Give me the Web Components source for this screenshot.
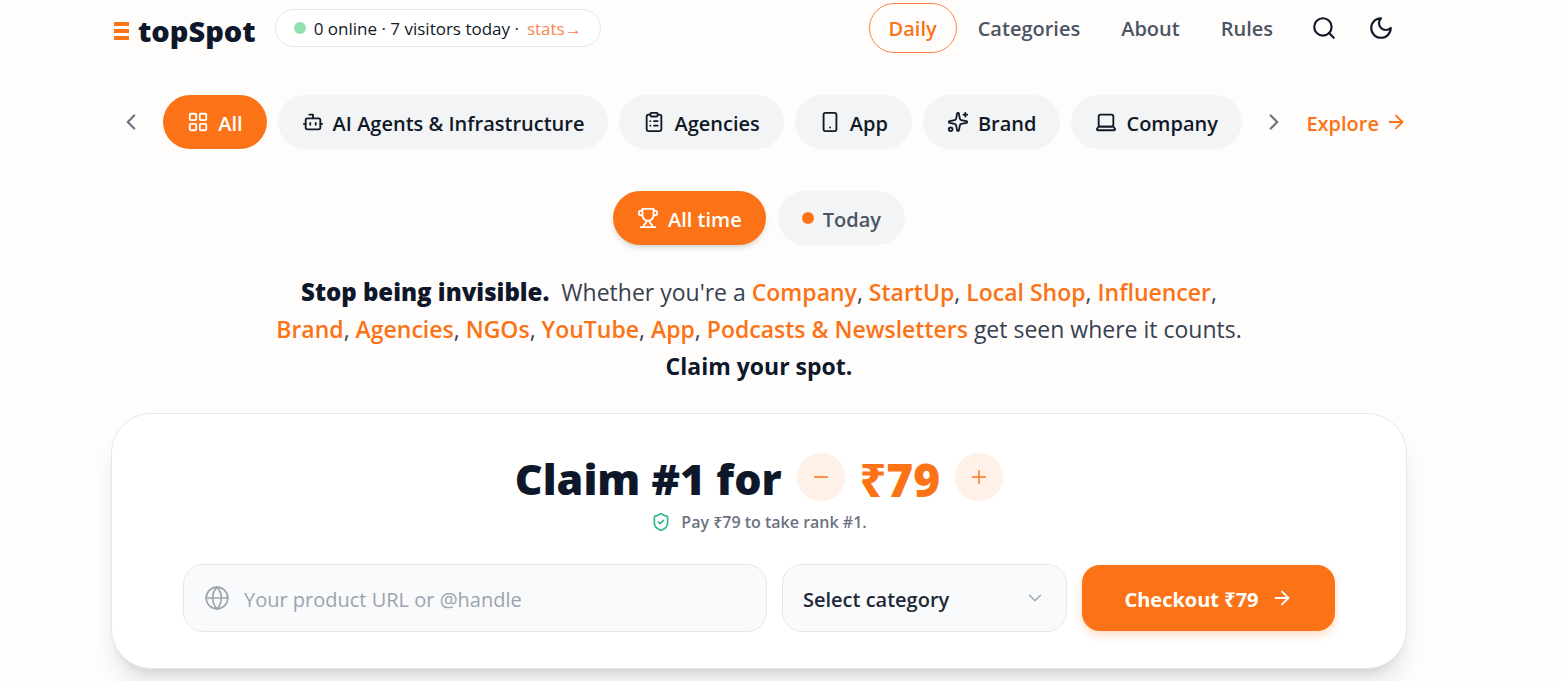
<!DOCTYPE html>
<html lang="en">
<head>
<meta charset="utf-8">
<meta name="viewport" content="width=device-width, initial-scale=1">
<title>topSpot</title>
<style>
    body{
        margin:0;
        background:#fefdfb;
        color:#111827;
        font-family:"Open Sans","Noto Sans",sans-serif;
        --accent:#fb7316;
        --ink:#0f172a;
        --muted:#4b5563;
        --soft:#f3f4f6;
        --line:#e5e7eb;
    }
</style>
</head>
<body>
<top-page>
    <top-header slot="header">
        <visitor-badge slot="badge" online="0" visitors="7"></visitor-badge>
        <nav-link current>Daily</nav-link>
        <nav-link>Categories</nav-link>
        <nav-link>About</nav-link>
        <nav-link>Rules</nav-link>
    </top-header>

    <category-bar slot="categories">
        <pill-button icon="grid" active>All</pill-button>
        <pill-button icon="bot">AI Agents &amp; Infrastructure</pill-button>
        <pill-button icon="clipboard">Agencies</pill-button>
        <pill-button icon="tablet">App</pill-button>
        <pill-button icon="sparkles">Brand</pill-button>
        <pill-button icon="laptop">Company</pill-button>
    </category-bar>

    <period-switch slot="period">
        <pill-button icon="trophy" active raised>All time</pill-button>
        <pill-button dot>Today</pill-button>
    </period-switch>

    <hero-text slot="hero"></hero-text>
    <claim-card price="79" rank="1"></claim-card>
</top-page>

<script>
const ICONS = {
    grid:'<rect x="3" y="3" width="7" height="7" rx="1"/><rect x="14" y="3" width="7" height="7" rx="1"/><rect x="14" y="14" width="7" height="7" rx="1"/><rect x="3" y="14" width="7" height="7" rx="1"/>',
    bot:'<path d="M12 8V4H8"/><rect x="4" y="8" width="16" height="12" rx="2"/><path d="M2 14h2M20 14h2M15 13v2M9 13v2"/>',
    clipboard:'<rect x="8" y="2" width="8" height="4" rx="1"/><path d="M16 4h2a2 2 0 0 1 2 2v14a2 2 0 0 1-2 2H6a2 2 0 0 1-2-2V6a2 2 0 0 1 2-2h2"/><path d="M12 11h4M12 16h4M8 11h.01M8 16h.01"/>',
    tablet:'<rect x="5" y="2" width="14" height="20" rx="2"/><path d="M12 18h.01"/>',
    sparkles:'<path d="M11.017 2.814a1 1 0 0 1 1.966 0l1.051 5.558a2 2 0 0 0 1.594 1.594l5.558 1.051a1 1 0 0 1 0 1.966l-5.558 1.051a2 2 0 0 0-1.594 1.594l-1.051 5.558a1 1 0 0 1-1.966 0l-1.051-5.558a2 2 0 0 0-1.594-1.594l-5.558-1.051a1 1 0 0 1 0-1.966l5.558-1.051a2 2 0 0 0 1.594-1.594z"/><path d="M20 2v4M22 4h-4"/><circle cx="4" cy="20" r="2"/>',
    laptop:'<rect x="4" y="4" width="16" height="13" rx="2"/><path d="M4 17h16l2 3a1 1 0 0 1-1 1H3a1 1 0 0 1-1-1z"/>',
    trophy:'<path d="M6 9H4.500a2.500 2.500 0 0 1 0-5H6M18 9h1.500a2.500 2.500 0 0 0 0-5H18M4 22h16M10 14.660V17c0 .550-.470.980-.970 1.210C7.850 18.750 7 20.240 7 22M14 14.660V17c0 .550.470.980.970 1.210C16.150 18.750 17 20.240 17 22M18 2H6v7a6 6 0 0 0 12 0V2z"/>',
    search:'<circle cx="11" cy="11" r="8"/><path d="m21 21-4.300-4.300"/>',
    moon:'<path d="M12 3a6 6 0 0 0 9 9 9 9 0 1 1-9-9z"/>',
    left:'<path d="m15 18-6-6 6-6"/>',
    right:'<path d="m9 18 6-6-6-6"/>',
    down:'<path d="m6 9 6 6 6-6"/>',
    arrow:'<path d="M5 12h14M12 5l7 7-7 7"/>',
    minus:'<path d="M5 12h14"/>',
    plus:'<path d="M5 12h14M12 5v14"/>',
    globe:'<circle cx="12" cy="12" r="10"/><path d="M12 2a14.500 14.500 0 0 0 0 20 14.500 14.500 0 0 0 0-20M2 12h20"/>',
    shield:'<path d="M20 13c0 5-3.500 7.500-7.660 8.950a1 1 0 0 1-.670-.010C7.500 20.500 4 18 4 13V6a1 1 0 0 1 1-1c2 0 4.500-1.200 6.240-2.720a1.170 1.170 0 0 1 1.520 0C14.510 3.810 17 5 19 5a1 1 0 0 1 1 1z"/><path d="m9 12 2 2 4-4"/>'
}

// shared by every element: build the shadow root from getTemplate() and getStyle()
class BaseElement extends HTMLElement{
    constructor(){
        super()
        this.attachShadow({mode:'open'})
    }

    getStyle(){
        return ''
    }

    render(){
        const template = document.createElement("template")
        template.innerHTML = `
        <style>
            *{ box-sizing:border-box; }
            a{ color:inherit; text-decoration:none; }
            button{
                font:inherit;
                color:inherit;
                background:none;
                border:0;
                padding:0;
                cursor:pointer;
            }
            ${this.getStyle()}
        </style>
        ${this.getTemplate()}
        `
        this.shadowRoot.append(template.content.cloneNode(true))
    }

    connectedCallback(){
        if(!this.shadowRoot.hasChildNodes()) this.render()
    }
}

class UiIcon extends BaseElement{
    getTemplate(){
        return `<svg viewBox="0 0 24 24" aria-hidden="true">${ICONS[this.getAttribute('name')]}</svg>`
    }

    getStyle(){
        return `
            :host{
                display:block;
                flex:none;
                width:var(--icon-size,22px);
                height:var(--icon-size,22px);
            }
            svg{
                display:block;
                width:100%;
                height:100%;
                fill:none;
                stroke:currentColor;
                stroke-width:var(--icon-stroke,2);
                stroke-linecap:round;
                stroke-linejoin:round;
            }
        `
    }
}

class TopPage extends BaseElement{
    getTemplate(){
        return `
        <div class="wrap">
            <slot name="header"></slot>
            <main>
                <slot name="categories"></slot>
                <slot name="period"></slot>
                <slot name="hero"></slot>
                <slot></slot>
            </main>
        </div>`
    }

    getStyle(){
        return `
            :host{
                display:block;
                padding:0 68px 12px 24px;
            }
            .wrap{
                max-width:1296px;
                margin:0 auto;
            }
        `
    }
}

class TopHeader extends BaseElement{
    getTemplate(){
        return `
        <header>
            <a class="logo" href="#">
                <svg viewBox="0 0 15 18" aria-hidden="true"><path d="M0 0h15v4H0zM0 7h15v4H0zM0 14h15v4H0z"/></svg>
                <span>topSpot</span>
            </a>
            <slot name="badge"></slot>
            <nav><slot></slot></nav>
            <button class="tool" aria-label="Search"><ui-icon name="search"></ui-icon></button>
            <button class="tool" aria-label="Dark mode"><ui-icon name="moon"></ui-icon></button>
        </header>`
    }

    getStyle(){
        return `
            :host{ display:block; }
            header{
                display:flex;
                align-items:center;
                height:56px;
                padding-left:3px;
            }
            .logo{
                display:flex;
                align-items:center;
                gap:9px;
                margin-right:19px;
                padding-top:6px;
                color:var(--ink);
                font-size:29px;
                line-height:36px;
                font-weight:800;
            }
            .logo svg{
                width:15px;
                height:18px;
                fill:var(--accent);
            }
            nav{
                display:flex;
                gap:1px;
                margin-left:auto;
                margin-right:2px;
            }
            .tool{
                display:grid;
                place-items:center;
                width:57px;
                height:48px;
                --icon-size:26px;
            }
            .tool:last-child{ margin-right:-2px; }
        `
    }
}

class VisitorBadge extends BaseElement{
    getTemplate(){
        return `
        <i></i>
        <span>${this.getAttribute('online')} online · ${this.getAttribute('visitors')} visitors today ·</span>
        <a href="#stats">stats→</a>`
    }

    getStyle(){
        return `
            :host{
                display:flex;
                align-items:center;
                gap:8px;
                height:38px;
                box-sizing:border-box;
                padding:0 18px;
                border:1px solid var(--line);
                border-radius:19px;
                background:#fff;
                font-size:17px;
                white-space:nowrap;
            }
            i{
                width:12px;
                height:12px;
                border-radius:50%;
                background:#90e2ad;
            }
            a{ color:#f98450; }
        `
    }
}

class NavLink extends BaseElement{
    getTemplate(){
        return `<a href="#"><slot></slot></a>`
    }

    getStyle(){
        return `
            a{
                display:block;
                padding:2px 19px 0;
                border:1px solid transparent;
                border-radius:25px;
                color:var(--muted);
                font-size:20px;
                line-height:46px;
                font-weight:600;
            }
            :host([current]) a{
                color:var(--accent);
                border-color:#f98450;
            }
        `
    }
}

class PillButton extends BaseElement{
    getTemplate(){
        const mark = this.hasAttribute('dot') ? '<i></i>' : `<ui-icon name="${this.getAttribute('icon')}"></ui-icon>`
        return `<button aria-pressed="${this.hasAttribute('active')}">${mark}<span><slot></slot></span></button>`
    }

    getStyle(){
        return `
            :host{
                display:block;
                flex:none;
            }
            button{
                display:flex;
                align-items:center;
                gap:9px;
                height:54px;
                padding:0 24px;
                border-radius:27px;
                background:var(--soft);
                font-size:20px;
                font-weight:600;
                white-space:nowrap;
            }
            span{ padding-top:2px; }
            i{
                width:12px;
                height:12px;
                border-radius:50%;
                background:var(--accent);
            }
            :host([dot]) button{ color:var(--muted); }
            :host([active]) button{
                background:var(--accent);
                color:#fff;
            }
            :host([raised]) button{
                box-shadow:0 4px 6px -1px rgb(0 0 0 / .12),0 2px 4px -2px rgb(0 0 0 / .1);
            }
        `
    }
}

class CategoryBar extends BaseElement{
    getTemplate(){
        return `
        <button class="step" aria-label="Previous categories"><ui-icon name="left"></ui-icon></button>
        <div class="track"><slot></slot></div>
        <button class="step" aria-label="Next categories"><ui-icon name="right"></ui-icon></button>
        <a href="#explore"><span>Explore</span><ui-icon name="arrow"></ui-icon></a>`
    }

    getStyle(){
        return `
            :host{
                display:flex;
                align-items:center;
                justify-content:space-between;
                margin-top:39px;
            }
            .track{
                display:flex;
                gap:11px;
                overflow:hidden;
            }
            .step{
                display:grid;
                place-items:center;
                width:40px;
                height:40px;
                color:#6b7280;
                --icon-size:26px;
            }
            a{
                display:flex;
                align-items:center;
                gap:6px;
                color:var(--accent);
                font-size:20px;
                font-weight:600;
            }
            span{ padding-top:2px; }
        `
    }
}

class PeriodSwitch extends BaseElement{
    getTemplate(){
        return `<slot></slot>`
    }

    getStyle(){
        return `
            :host{
                display:flex;
                justify-content:center;
                gap:12px;
                margin-top:42px;
            }
        `
    }
}

class HeroText extends BaseElement{
    getTemplate(){
        const link = name => `<a href="#${name.toLowerCase().replace(/\W+/g,'-')}">${name.replace('&','&amp;')}</a>`
        const first = ['Company','StartUp','Local Shop','Influencer'].map(link).join(', ')
        const second = ['Brand','Agencies','NGOs','YouTube','App','Podcasts & Newsletters'].map(link).join(', ')
        return `
        <p>
            <strong class="lead">Stop being invisible.</strong>
            Whether you're a ${first},<br>
            ${second} get seen where it counts.<br>
            <strong>Claim your spot.</strong>
        </p>`
    }

    getStyle(){
        return `
            :host{ display:block; }
            p{
                margin:28px 0 0;
                color:#374151;
                font-size:23px;
                line-height:37px;
                text-align:center;
            }
            a{
                color:var(--accent);
                font-weight:600;
            }
            strong{
                color:var(--ink);
                font-weight:700;
            }
            .lead{
                margin-right:6px;
                font-size:24px;
                font-weight:800;
            }
        `
    }
}

class ClaimCard extends BaseElement{
    getTemplate(){
        const price = '₹' + this.getAttribute('price')
        const rank = '#' + this.getAttribute('rank')
        return `
        <div class="title">
            <h1>Claim ${rank} for</h1>
            <button class="round" aria-label="Lower the price"><ui-icon name="minus"></ui-icon></button>
            <output>${price}</output>
            <button class="round" aria-label="Raise the price"><ui-icon name="plus"></ui-icon></button>
        </div>
        <p><ui-icon name="shield"></ui-icon>Pay ${price} to take rank ${rank}.</p>
        <form>
            <label class="field url">
                <ui-icon name="globe"></ui-icon>
                <input type="text" aria-label="Product URL or handle" placeholder="Your product URL or @handle">
            </label>
            <label class="field category">
                <select aria-label="Category">
                    <option>Select category</option>
                    <option>Agencies</option>
                    <option>App</option>
                    <option>Brand</option>
                    <option>Company</option>
                </select>
                <ui-icon name="down"></ui-icon>
            </label>
            <button type="button" class="checkout"><span>Checkout ${price}</span><ui-icon name="arrow"></ui-icon></button>
        </form>`
    }

    getStyle(){
        return `
            :host{
                display:block;
                box-sizing:border-box;
                margin-top:28px;
                padding:35px 71px 36px;
                border:1px solid var(--line);
                border-radius:40px;
                background:#fff;
                box-shadow:0 20px 25px -5px rgb(0 0 0 / .1),0 8px 10px -6px rgb(0 0 0 / .1);
            }
            .title{
                display:flex;
                justify-content:center;
                align-items:center;
                gap:15px;
                height:56px;
                color:var(--ink);
                font-size:43px;
                line-height:56px;
                font-weight:800;
            }
            h1{
                margin:0;
                padding-top:4px;
                font:inherit;
            }
            output{
                padding-top:4px;
                color:var(--accent);
                font-size:46px;
            }
            .round{
                display:grid;
                place-items:center;
                width:48px;
                height:48px;
                border-radius:50%;
                background:#fff1e7;
                color:var(--accent);
                --icon-stroke:1.5;
            }
            p{
                display:flex;
                justify-content:center;
                align-items:center;
                gap:10px;
                margin:4px 0 0;
                color:#6b7280;
                font-size:16px;
                line-height:26px;
                font-weight:600;
            }
            p ui-icon{
                --icon-size:20px;
                color:#2fb886;
            }
            form{
                display:flex;
                align-items:center;
                gap:15px;
                margin-top:29px;
            }
            .field{
                display:flex;
                align-items:center;
                height:68px;
                padding:0 20px;
                border:1px solid var(--line);
                border-radius:20px;
                background:#f9fafb;
                color:#9ca3af;
                --icon-stroke:1.5;
            }
            .url{
                flex:1;
                gap:14px;
                --icon-size:26px;
            }
            input,select{
                flex:1;
                min-width:0;
                padding:2px 0 0;
                border:0;
                outline:0;
                background:none;
                font:inherit;
                font-size:20px;
            }
            input{ color:var(--ink); }
            input::placeholder{ color:#9ca3af; }
            .category{ width:285px; }
            select{
                appearance:none;
                color:#1f2937;
                font-weight:600;
            }
            .checkout{
                display:flex;
                justify-content:center;
                align-items:center;
                gap:12px;
                width:253px;
                height:66px;
                border-radius:18px;
                background:var(--accent);
                box-shadow:0 4px 8px rgb(251 115 22 / .25);
                color:#fff;
                font-size:20px;
                font-weight:700;
            }
            .checkout span{ padding-top:2px; }
        `
    }
}

customElements.define('ui-icon',UiIcon)
customElements.define('top-page',TopPage)
customElements.define('top-header',TopHeader)
customElements.define('visitor-badge',VisitorBadge)
customElements.define('nav-link',NavLink)
customElements.define('pill-button',PillButton)
customElements.define('category-bar',CategoryBar)
customElements.define('period-switch',PeriodSwitch)
customElements.define('hero-text',HeroText)
customElements.define('claim-card',ClaimCard)
</script>
</body>
</html>
